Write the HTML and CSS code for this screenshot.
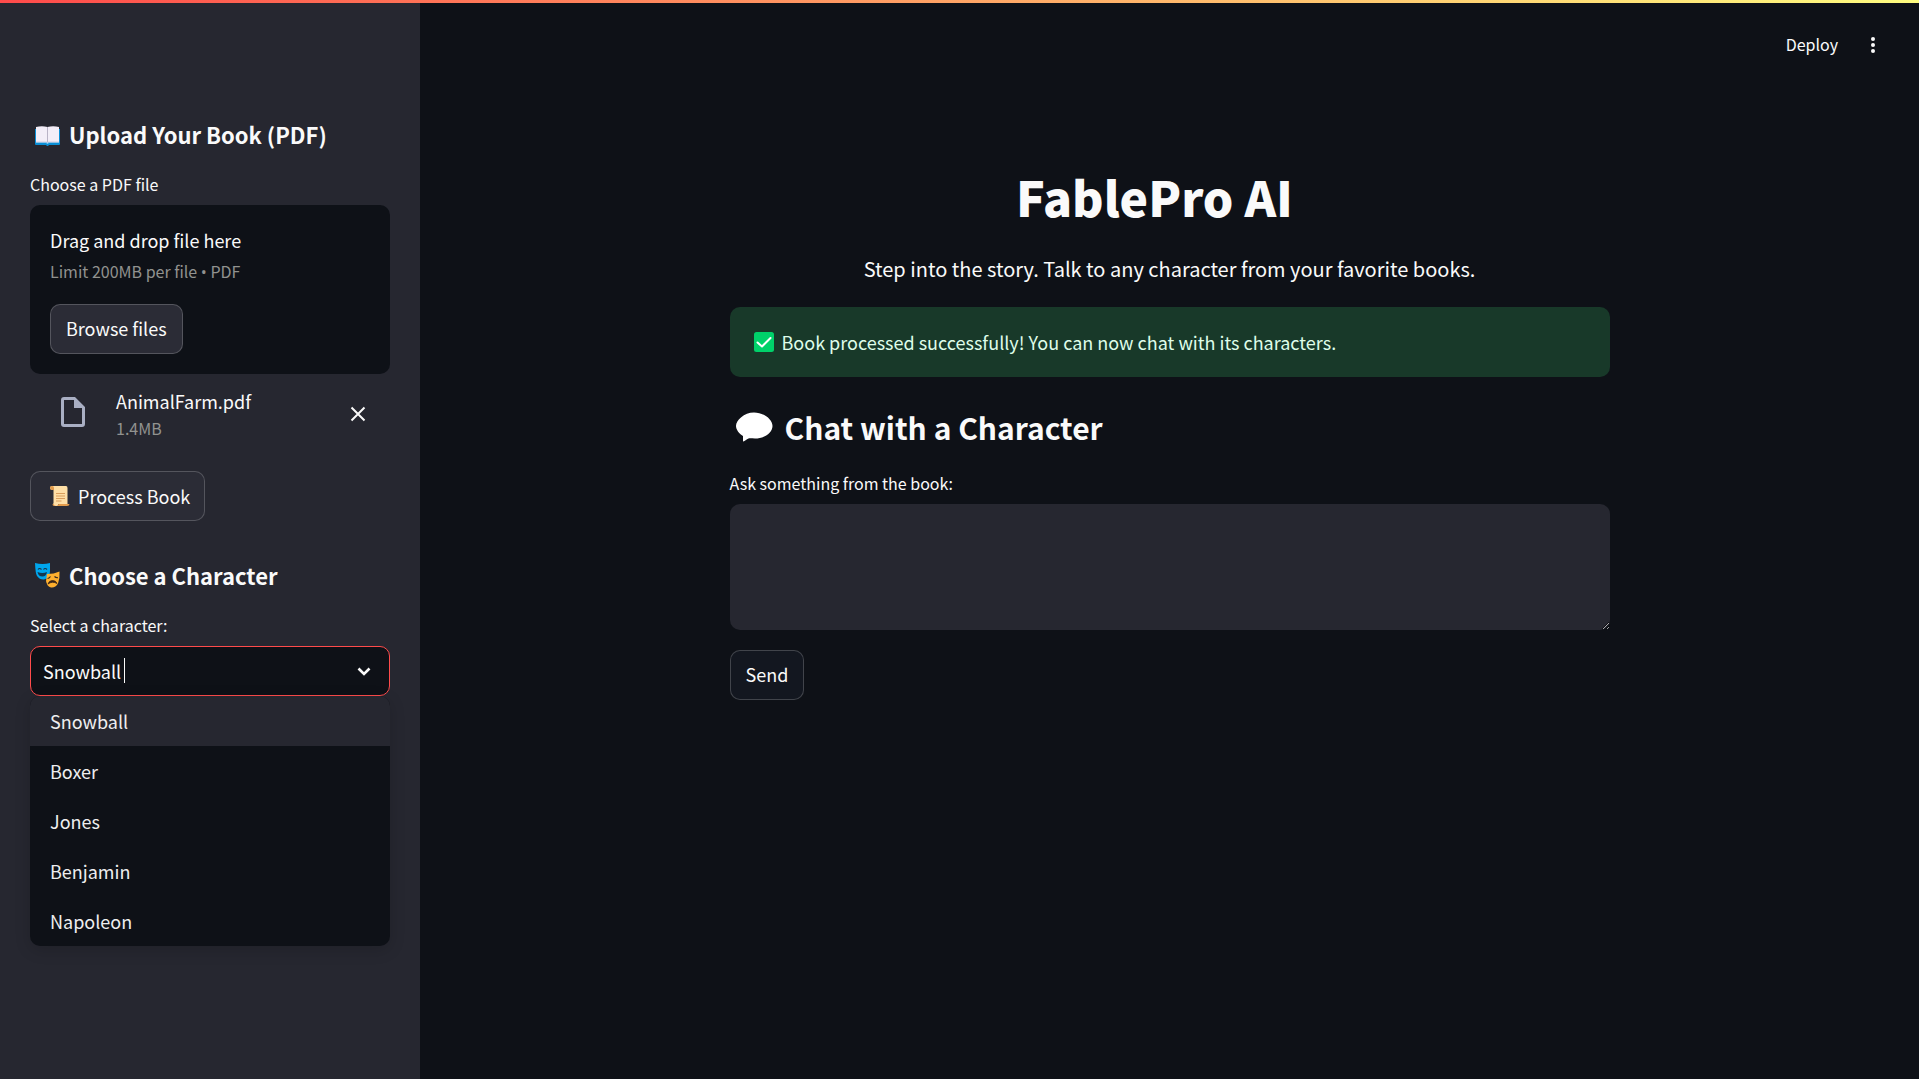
FILE: index.html
```html
<!DOCTYPE html>
<html lang="en">
<head>
<meta charset="utf-8">
<meta name="viewport" content="width=device-width, initial-scale=1">
<title>FablePro AI</title>
<link rel="stylesheet" href="styles.css">
</head>
<body>
<div class="decoration"></div>
<div class="app">
  <aside class="sidebar">
    <section class="upload">
      <h3 class="side-title">
        <svg class="emoji" viewBox="0 -3 30 30" aria-hidden="true">
          <path d="M5 7h25v15q0 1-1 1H19l-1 1h-1l-1-1H6q-1 0-1-1z" fill="#0a8fd6"/>
          <path d="M6 20h23v1H19l-1 1h-1l-1-1H6z" fill="#55b9ea"/>
          <path d="M6 5q6-1.500 11.500 0 5.500-1.500 11.500 0V20H18.500l-1 .8-1-.8H6z" fill="#f3eef8"/>
          <path d="M17.500 5V20" stroke="#b9b3c6" fill="none"/>
          <path d="M6 20h10.500l1 .8 1-.8H29" stroke="#d3ccdf" fill="none"/>
        </svg>
        Upload Your Book (PDF)
      </h3>
      <label class="label" for="file-browse">Choose a PDF file</label>
      <div class="dropzone">
        <p class="drop-text">Drag and drop file here</p>
        <p class="drop-limit">Limit 200MB per file <span class="bullet">•</span> PDF</p>
        <button class="btn btn-side" id="file-browse" type="button">Browse files</button>
      </div>
      <div class="file">
        <svg class="file-icon" viewBox="0 0 24 30" aria-hidden="true">
          <path d="M3 0h11l10 10v17a3 3 0 0 1-3 3H3a3 3 0 0 1-3-3V3a3 3 0 0 1 3-3zM3 3v24h18V11h-8V3z" fill="#a9afc3" fill-rule="evenodd"/>
        </svg>
        <div class="file-info">
          <span class="file-name">AnimalFarm.pdf</span>
          <span class="file-size">1.4MB</span>
        </div>
        <button class="icon-btn" type="button" aria-label="Remove file">
          <svg width="16" height="16" viewBox="0 0 16 16"><path d="M1.500 1.500l13 13M14.500 1.500l-13 13" stroke="#fafafa" stroke-width="2"/></svg>
        </button>
      </div>
      <button class="btn btn-side btn-process" type="button">
        <svg class="emoji-small" viewBox="0 0 22 22" aria-hidden="true">
          <path d="M3 1h14q1.500 0 1.500 2v16h-14V5H3.500Q1 5 1 3q0-2 2-2z" fill="#ffdfa6"/>
          <path d="M3 1q2 0 2 2v2H3.500Q1 5 1 3q0-2 2-2z" fill="#e39b4b"/>
          <path d="M10 19h10.500q0 2-2.500 2H5q-1.500-.2-1.500-2H8q0 .8 1 .8z" fill="#e39b4b"/>
          <path d="M4.500 18h5q.3 2.500-2 3-2.800-.2-3-3z" fill="#ffdfa6"/>
          <path d="M7 8.500h9M7 11h9M7 13.500h9M7 16h5.500" stroke="#d99e5c" fill="none"/>
        </svg>
        Process Book
      </button>
    </section>

    <section class="choose">
      <h3 class="side-title">
        <svg class="emoji" viewBox="0 0 30 30" aria-hidden="true">
          <path d="M5 3q7.500 2 15 0v8q0 7-6 8.500-4 .5-7-3.500-1.500-2-2-13z" fill="#00a6ed"/>
          <path d="M8 9.500q1.500-2 3.500 0M13.500 9.500q1.500-2 3.500 0" stroke="#1b3144" stroke-width="1.200" fill="none"/>
          <path d="M7.500 12q5 2 9.500 0-.8 4.500-4.700 4.500T7.500 12z" fill="#12384f"/>
          <path d="M17 14q7 0 12.500-2.500Q30 18 28 23.500 25.500 28 21 27.500 17 26.500 16 21z" fill="#ffb02e"/>
          <path d="M17.500 18.500q1.500 0 3-2M24.500 16.500q1.500 1.500 3.500 1.200" stroke="#3a2a20" stroke-width="1.200" fill="none"/>
          <path d="M18 24q1-3.500 4.500-3.500T27 23.500q-2-1.300-4.500-1.200T18 24z" fill="#3a2417" stroke="#3a2417" stroke-width=".8"/>
        </svg>
        Choose a Character
      </h3>
      <label class="label" for="character">Select a character:</label>
      <div class="select-wrap">
        <select class="select" id="character">
          <option selected>Snowball</option>
          <option>Boxer</option>
          <option>Jones</option>
          <option>Benjamin</option>
          <option>Napoleon</option>
        </select>
        <span class="caret"></span>
        <svg class="chevron" viewBox="0 0 14 9" aria-hidden="true"><path d="M1.500 1.500L7 7l5.500-5.500" fill="none" stroke="#fafafa" stroke-width="2.600"/></svg>
        <ul class="menu" role="listbox" aria-label="Characters">
          <li class="option option-active" role="option" aria-selected="true">Snowball</li>
          <li class="option" role="option">Boxer</li>
          <li class="option" role="option">Jones</li>
          <li class="option" role="option">Benjamin</li>
          <li class="option" role="option">Napoleon</li>
        </ul>
      </div>
    </section>
  </aside>

  <div class="page">
    <header class="toolbar">
      <button class="deploy" type="button">Deploy</button>
      <button class="icon-btn" type="button" aria-label="Main menu">
        <svg width="6" height="18" viewBox="0 0 6 18"><g fill="#fafafa"><circle cx="3" cy="3" r="2"/><circle cx="3" cy="9" r="2"/><circle cx="3" cy="15" r="2"/></g></svg>
      </button>
    </header>
    <main class="content">
      <h1 class="title">FablePro AI</h1>
      <p class="subtitle">Step into the story. Talk to any character from your favorite books.</p>
      <div class="alert" role="alert">
        <svg class="emoji-small" viewBox="0 0 22 22" aria-hidden="true">
          <rect x="1" y="1" width="20" height="20" rx="2.500" fill="#00d26a"/>
          <path d="M4.500 11.500l4.500 4L17.500 7" fill="none" stroke="#fff" stroke-width="2" stroke-linecap="round" stroke-linejoin="round"/>
        </svg>
        Book processed successfully! You can now chat with its characters.
      </div>
      <h2 class="chat-title">
        <svg class="emoji-large" viewBox="0 0 44 36" aria-hidden="true">
          <path d="M24 3.500c10 0 18.500 7 18.500 13.500S35 29.500 25 29.500c-3 0-5-.3-6.500 0-2 .6-4 3-5 3-.8 0-.5-1-.5-2.500v-3C9 24.500 6 20.500 6 17 6 11.500 14 3.500 24 3.500z" fill="#fff"/>
        </svg>
        Chat with a Character
      </h2>
      <label class="label" for="question">Ask something from the book:</label>
      <textarea class="textarea" id="question"></textarea>
      <button class="btn" type="button">Send</button>
    </main>
  </div>
</div>
</body>
</html>
```

FILE: styles.css
```css
:root {
  color-scheme: dark;
  --bg: #0e1117;
  --panel: #262730;
  --text: #fafafa;
  --muted: #91928f;
  --border: rgba(250, 250, 250, 0.2);
  --font: "Noto Sans CJK SC", "Noto Sans", sans-serif;
}

* {
  box-sizing: border-box;
}

body {
  margin: 0;
  background: var(--bg);
  color: var(--text);
  font-family: var(--font);
  font-size: 18px;
  line-height: 30px;
}

h1, h2, h3, p, ul {
  margin: 0;
  padding: 0;
}

button, select, textarea {
  font: inherit;
  color: inherit;
}

.decoration {
  position: fixed;
  top: 0;
  left: 0;
  right: 0;
  height: 3px;
  background: linear-gradient(90deg, #ff4b4b, #fffd80);
  z-index: 2;
}

.app {
  display: flex;
  min-height: 100vh;
}

/* Sidebar */
.sidebar {
  flex: 0 0 420px;
  padding: 119px 30px 30px;
  background: var(--panel);
}

.side-title {
  display: flex;
  align-items: center;
  gap: 9px;
  margin-bottom: 20px;
  font-size: 22px;
  line-height: 30px;
  font-weight: 700;
}

.emoji {
  width: 30px;
  height: 30px;
}

.emoji-small {
  width: 22px;
  height: 22px;
}

.emoji-large {
  width: 44px;
  height: 36px;
}

.label {
  display: block;
  margin-bottom: 6px;
  font-size: 16px;
  line-height: 30px;
}

.dropzone {
  padding: 19px 20px 20px;
  border-radius: 10px;
  background: var(--bg);
}

.drop-text {
  line-height: 32px;
}

.drop-limit {
  margin-bottom: 18px;
  font-size: 16px;
  color: var(--muted);
}

.bullet {
  font-family: "Open Sans", sans-serif;
  line-height: 20px;
}

.btn {
  display: inline-flex;
  align-items: center;
  gap: 7px;
  height: 50px;
  padding: 0 15px 2px;
  border: 1px solid var(--border);
  border-radius: 10px;
  background: #131720;
  white-space: nowrap;
}

.btn-side {
  background: #2b2c36;
}

.btn-process {
  padding: 0 14px 0 18px;
}

.file {
  display: flex;
  align-items: flex-start;
  padding: 14px 24px 29px 31px;
}

.file-icon {
  width: 24px;
  height: 30px;
  margin-top: 9px;
}

.file .icon-btn {
  margin-top: 18px;
}

.file-info {
  display: flex;
  flex: 1;
  flex-direction: column;
  margin-left: 31px;
  line-height: 27px;
}

.file-size {
  font-size: 16px;
  color: var(--muted);
}

.icon-btn {
  display: flex;
  padding: 0;
  border: 0;
  background: none;
}

.choose {
  padding-top: 39px;
}

.select-wrap {
  position: relative;
}

.select {
  display: block;
  width: 100%;
  height: 50px;
  padding: 0 40px 0 12px;
  border: 1px solid #ff4b4b;
  border-radius: 10px;
  outline: none;
  appearance: none;
  background: var(--bg);
}

.caret {
  position: absolute;
  top: 12px;
  left: 94px;
  width: 1px;
  height: 25px;
  background: var(--text);
}

.chevron {
  position: absolute;
  top: 21px;
  right: 19px;
  width: 14px;
  height: 9px;
}

.menu {
  position: absolute;
  top: 100%;
  left: 0;
  right: 0;
  overflow: hidden;
  border-radius: 10px;
  background: var(--bg);
  box-shadow: 0 4px 16px rgba(0, 0, 0, 0.16);
  list-style: none;
}

.option {
  padding: 10px 20px;
  color: #eeeeef;
}

.option-active {
  background: var(--panel);
}

/* Main column */
.page {
  flex: 1;
  min-width: 0;
}

.toolbar {
  display: flex;
  align-items: center;
  justify-content: flex-end;
  gap: 32px;
  height: 90px;
  padding-right: 43px;
}

.deploy {
  padding: 0 0 2px;
  border: 0;
  background: none;
  font-size: 16px;
}

.content {
  max-width: 880px;
  margin: 0 auto;
  padding: 73px 0 60px;
}

.title {
  padding-right: 30px;
  font-size: 48px;
  line-height: 66px;
  font-weight: 900;
  text-align: center;
}

.subtitle {
  margin: 25px 0 23px;
  font-size: 20px;
  text-align: center;
}

.alert {
  display: flex;
  align-items: center;
  gap: 7px;
  padding: 20px 23px;
  border-radius: 10px;
  background: #183929;
  color: #dffde9;
}

.chat-title {
  display: flex;
  align-items: center;
  gap: 11px;
  margin: 27px 0 18px;
  font-size: 30px;
  line-height: 46px;
  font-weight: 700;
}

.textarea {
  display: block;
  width: 100%;
  height: 126px;
  margin-bottom: 20px;
  padding: 15px;
  border: 0;
  border-radius: 10px;
  outline: none;
  background: var(--panel);
  resize: vertical;
}
```
